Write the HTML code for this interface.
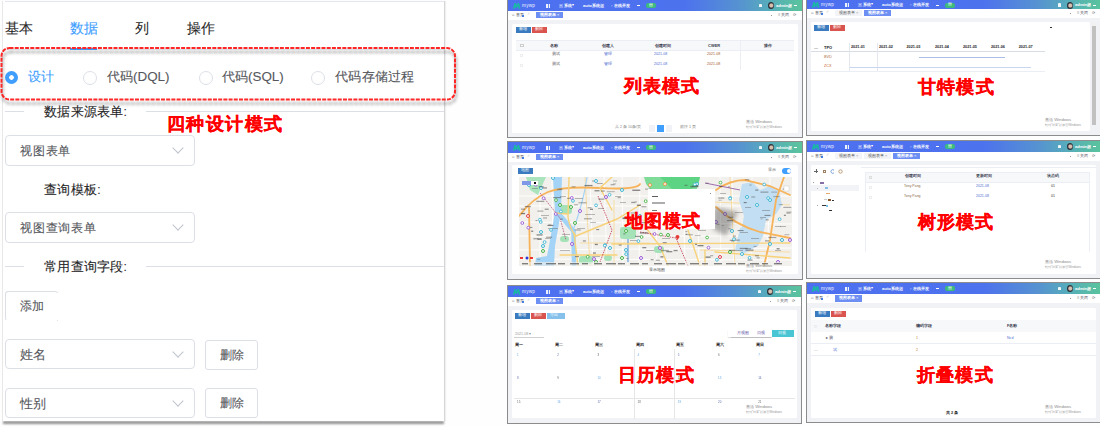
<!DOCTYPE html>
<html><head><meta charset="utf-8">
<style>
*{box-sizing:border-box;margin:0;padding:0}
html,body{width:1100px;height:427px;overflow:hidden;background:#fefefe;font-family:"Liberation Sans",sans-serif;position:relative}
.a{position:absolute;white-space:nowrap}
#panel{position:absolute;left:2px;top:1px;width:443px;height:420px;background:#fff;border-left:1px solid #e8e8e8;border-right:1px solid #d6d6d6;box-shadow:1px 0 1px rgba(0,0,0,.06)}
#pshadow{position:absolute;left:3px;top:420.5px;width:440.5px;height:3.5px;background:#8f8f8f;filter:blur(.9px)}
#ptop{position:absolute;left:5px;top:1px;width:439px;height:1px;background:#e4e7ed}
.t14{font-size:14px;line-height:16px}
.t13{font-size:13px;line-height:16px}
.t13s{font-size:13px;line-height:16px;letter-spacing:.25px}
.t13n{font-size:13px;line-height:15px}
.t12{font-size:12px;line-height:15px;letter-spacing:.8px}
.t12b{font-size:12px;line-height:15px}
.lat{font-size:13.4px;letter-spacing:0px}
.col{font-size:12px}
.gray{color:#55575c;-webkit-text-stroke:.1px #55575c}
.dark{color:#262626;-webkit-text-stroke:.1px #262626}
.blue{color:#409eff;-webkit-text-stroke:.1px #409eff}
.radio{position:absolute;width:14px;height:14px;border:1px solid #dcdfe6;border-radius:50%;background:#fff}
.radio.on{width:13px;height:13px;border:none;background:radial-gradient(circle,#fff 0 2px,#409eff 2.6px)}
.sel{position:absolute;border:1px solid #dcdfe6;border-radius:4px;background:#fff}
.chev{position:absolute;width:8px;height:8px;border-right:1px solid #c0c4cc;border-bottom:1px solid #c0c4cc;transform:rotate(45deg)}
.btn{position:absolute;border:1px solid #dcdfe6;border-radius:3px;background:#fff}
.hl{position:absolute;height:1px;background:#dcdfe6}
.lbl{font-size:18px;line-height:19px;font-weight:bold;color:#f00;-webkit-text-stroke:.25px #f00;letter-spacing:1.2px}
</style></head><body>
<div id="pshadow"></div>
<div id="panel"></div>
<div id="ptop"></div>
<!-- tabs -->
<div class="a t14 dark" style="left:5px;top:19.5px">基本</div>
<div class="a t14 blue" style="left:70px;top:19.5px">数据</div>
<div class="a t14 dark" style="left:135px;top:19.5px">列</div>
<div class="a t14 dark" style="left:187px;top:19.5px">操作</div>
<div class="a" style="left:2px;top:49px;width:442px;height:1px;background:#e4e7ed"></div>
<div class="a" style="left:70px;top:48px;width:27px;height:2px;background:#409eff"></div>
<!-- radios -->
<div class="radio on" style="left:5px;top:71px"></div>
<div class="a t13 blue" style="left:28px;top:68.5px">设计</div>
<div class="radio" style="left:83px;top:71px"></div>
<div class="a t13 gray" style="left:107px;top:68.5px">代码<span class="lat">(DQL)</span></div>
<div class="radio" style="left:199px;top:71px"></div>
<div class="a t13 gray" style="left:222px;top:68.5px">代码<span class="lat">(SQL)</span></div>
<div class="radio" style="left:311px;top:71px"></div>
<div class="a t13 gray" style="left:335px;top:68.5px;letter-spacing:.3px">代码存储过程</div>
<!-- divider 1 -->
<div class="hl" style="left:5px;top:111px;width:19px"></div>
<div class="a t13s dark" style="left:44px;top:103.5px">数据来源表单<span class="col">:</span></div>
<div class="hl" style="left:146px;top:111px;width:298px"></div>
<div class="a lbl" style="left:166.5px;top:114.5px;font-size:18px;line-height:19px;letter-spacing:1.6px">四种设计模式</div>
<!-- select 1 -->
<div class="sel" style="left:5px;top:135px;width:190px;height:31px"></div>
<div class="a t12 gray" style="left:20px;top:144px">视图表单</div>
<div class="chev" style="left:174px;top:144px"></div>
<div class="a t13 dark" style="left:44px;top:181.5px;letter-spacing:.3px">查询模板<span class="col">:</span></div>
<div class="sel" style="left:5px;top:212px;width:190px;height:31px"></div>
<div class="a t12 gray" style="left:20px;top:221px">视图查询表单</div>
<div class="chev" style="left:174px;top:221px"></div>
<!-- divider 2 -->
<div class="hl" style="left:5px;top:266px;width:19px"></div>
<div class="a t13s dark" style="left:44px;top:258.5px">常用查询字段<span class="col">:</span></div>
<div class="hl" style="left:146px;top:266px;width:298px"></div>
<!-- add -->
<div class="btn" style="left:5px;top:291px;width:53px;height:30px;border-right-color:transparent;border-bottom-color:transparent"></div>
<div class="a" style="left:56.5px;top:291.5px;width:1px;height:1.5px;background:#dcdfe6"></div>
<div class="a" style="left:57px;top:319.5px;width:1px;height:1px;background:#e2e4ea"></div>
<div class="a t12b gray" style="left:20px;top:299px">添加</div>
<div class="sel" style="left:5px;top:339px;width:190px;height:30px"></div>
<div class="a t13n gray" style="left:20px;top:346.5px">姓名</div>
<div class="chev" style="left:174px;top:348px"></div>
<div class="btn" style="left:205px;top:340px;width:53px;height:30px"></div>
<div class="a t12b gray" style="left:220px;top:347.5px">删除</div>
<div class="sel" style="left:5px;top:388px;width:190px;height:30px"></div>
<div class="a t13n gray" style="left:20px;top:395.5px">性别</div>
<div class="chev" style="left:174px;top:397px"></div>
<div class="btn" style="left:205px;top:388px;width:53px;height:30px"></div>
<div class="a t12b gray" style="left:220px;top:396px">删除</div>
<!-- dashed highlight -->
<svg class="a" style="left:0;top:0;filter:drop-shadow(1px 4px 1.5px rgba(0,0,0,.38))" width="470" height="120">
<rect x="1.5" y="48" width="453.5" height="51.5" rx="8" ry="8" fill="none" stroke="#ff2626" stroke-width="2" stroke-dasharray="4 1.2"/>
</svg>

<div class="a" style="left:507px;top:-2px;width:296px;height:140px;border:1px solid #8c8c8c;background:#f0f2f5"></div><div class="a" style="left:508px;top:0px;width:294px;height:10.5px;background:linear-gradient(90deg,#4d70f0 0%,#4d72ee 60%,#5693d0 79%,#56adba 89%,#5ac49c 100%)"></div><svg class="a" style="left:513px;top:3.05px" width="8" height="6" viewBox="0 0 8 6"><path d="M0.6 5.8 L2.2 0.6 L3.4 4.2 L5.4 0.6 L6.6 5.8" fill="none" stroke="#1bb7a6" stroke-width="1.7" stroke-linejoin="round"/></svg><div class="a" style="left:522px;top:3.6499999999999995px;font-size:4.6px;line-height:4.6px;color:#f4f7ff;letter-spacing:.3px">mywp</div><div class="a" style="left:546px;top:4.05px;width:4px;height:3.6px;background:#fff;opacity:.9"></div><div class="a" style="left:547.8px;top:4.05px;width:0.6px;height:3.6px;background:#6c8cf0"></div><div class="a" style="left:559px;top:3.6499999999999995px;font-size:4.2px;line-height:4.2px;color:#fff;font-weight:bold">三 系统</div><div class="a" style="left:572px;top:3.8499999999999996px;font-size:3.5px;line-height:3.5px;color:#fff;">▾</div><div class="a" style="left:583px;top:3.6499999999999995px;font-size:4.2px;line-height:4.2px;color:#fff;font-weight:bold">auto系统运</div><div class="a" style="left:611px;top:3.6499999999999995px;font-size:4.2px;line-height:4.2px;color:#fff;font-weight:bold">◦ 在线开发</div><div class="a" style="left:637px;top:5.35px;width:3px;height:1px;background:#fff"></div><div class="a" style="left:646px;top:3.3499999999999996px;width:10px;height:5px;background:#3dba7e;border-radius:2px"></div><div class="a" style="left:648.5px;top:4.05px;font-size:3.6px;line-height:3.6px;color:#fff;">▤</div><div class="a" style="left:759px;top:3.8499999999999996px;width:2.5px;height:3.5px;background:#fff;border-radius:1px 1px 0 0;opacity:.9"></div><div class="a" style="left:768px;top:2.3499999999999996px;width:6px;height:7px;background:radial-gradient(circle at 55% 50%,#d8c0b0 0 30%,#2e3038 55%);border-radius:50%"></div><div class="a" style="left:776px;top:3.6499999999999995px;font-size:4.2px;line-height:4.2px;color:#fff;font-weight:bold">admin超</div><div class="a" style="left:794px;top:5.35px;width:3px;height:1px;background:#fff"></div><div class="a" style="left:508px;top:10.5px;width:294px;height:9.5px;background:#fff"></div><div class="a" style="left:512px;top:13.25px;font-size:4px;line-height:4px;color:#4a4f5c;">⌂ 首页</div><div class="a" style="left:522px;top:15.25px;width:2px;height:1.5px;background:#4a7de0"></div><div class="a" style="left:527px;top:13.25px;font-size:3.5px;line-height:3.5px;color:#bbb;">✓</div><div class="a" style="left:536px;top:11.95px;width:27px;height:6.5px;background:#6d8ef2"></div><div class="a" style="left:540px;top:13.25px;font-size:4px;line-height:4px;color:#fff;font-weight:bold">视图表单</div><div class="a" style="left:557px;top:13.25px;font-size:4px;line-height:4px;color:#fff;">×</div><div class="a" style="left:771px;top:14.75px;width:1px;height:1px;background:#999"></div><div class="a" style="left:778px;top:13.25px;font-size:4px;line-height:4px;color:#556;">≡ 关闭</div><div class="a" style="left:793px;top:13.05px;font-size:4.4px;line-height:4.4px;color:#777;">⟳</div><div class="a" style="left:512px;top:24px;width:286px;height:108.5px;background:#fff;border-radius:1.5px"></div><div class="a" style="left:516px;top:27px;width:15px;height:6px;background:#3a7bbf"></div><div class="a" style="left:519px;top:28.2px;font-size:3.6px;line-height:3.6px;color:#fff;">新增</div><div class="a" style="left:532px;top:27px;width:15px;height:6px;background:#d9534f"></div><div class="a" style="left:535px;top:28.2px;font-size:3.6px;line-height:3.6px;color:#fff;">删除</div><div class="a" style="left:516px;top:40px;width:278px;height:1px;background:#ebeef5"></div><div class="a" style="left:516px;top:41px;width:278px;height:9px;background:#f7f8fa"></div><div class="a" style="left:516px;top:50px;width:278px;height:0.5px;background:#ebeef5"></div><div class="a" style="left:740px;top:40px;width:1px;height:30px;background:#ebeef5"></div><div class="a" style="left:520px;top:43.5px;width:3.5px;height:3.5px;border:0.6px solid #ccc;background:#fff"></div><div class="a" style="left:550px;top:43.5px;font-size:4px;line-height:4px;color:#3d4250;font-weight:bold">名称</div><div class="a" style="left:602px;top:43.5px;font-size:4px;line-height:4px;color:#3d4250;font-weight:bold">创建人</div><div class="a" style="left:655px;top:43.5px;font-size:4px;line-height:4px;color:#3d4250;font-weight:bold">创建时间</div><div class="a" style="left:708px;top:43.5px;font-size:4px;line-height:4px;color:#3d4250;font-weight:bold">CWER</div><div class="a" style="left:764px;top:43.5px;font-size:4px;line-height:4px;color:#3d4250;font-weight:bold">操作</div><div class="a" style="left:520px;top:54px;width:3px;height:3px;border:0.5px solid #eee"></div><div class="a" style="left:552px;top:53px;font-size:3.6px;line-height:3.6px;color:#555;">测试</div><div class="a" style="left:604px;top:53px;font-size:3.6px;line-height:3.6px;color:#4a6cd0;">管理</div><div class="a" style="left:654px;top:53px;font-size:3.6px;line-height:3.6px;color:#4a6cd0;">2021-08</div><div class="a" style="left:707px;top:53px;font-size:3.6px;line-height:3.6px;color:#a05a2c;">2021-08</div><div class="a" style="left:520px;top:64px;width:3px;height:3px;border:0.5px solid #eee"></div><div class="a" style="left:552px;top:63px;font-size:3.6px;line-height:3.6px;color:#555;">测试</div><div class="a" style="left:604px;top:63px;font-size:3.6px;line-height:3.6px;color:#4a6cd0;">管理</div><div class="a" style="left:654px;top:63px;font-size:3.6px;line-height:3.6px;color:#4a6cd0;">2021-08</div><div class="a" style="left:707px;top:63px;font-size:3.6px;line-height:3.6px;color:#a05a2c;">2021-08</div><div class="a lbl" style="left:623.5px;top:77px">列表模式</div><div class="a" style="left:615px;top:126px;font-size:3.6px;line-height:3.6px;color:#888;">共 2 条 10条/页</div><div class="a" style="left:649px;top:125px;width:6px;height:6.5px;background:#f0f2f5"></div><div class="a" style="left:657px;top:125px;width:7px;height:6.5px;background:#409eff"></div><div class="a" style="left:666px;top:125px;width:6px;height:6.5px;background:#f0f2f5"></div><div class="a" style="left:680px;top:126px;font-size:3.6px;line-height:3.6px;color:#777;">前往 1 页</div><div class="a" style="left:746px;top:120px;font-size:4.2px;line-height:4.2px;color:#8a8a8a;">激活 Windows</div><div class="a" style="left:746px;top:126.3px;font-size:3.1px;line-height:3.1px;color:#999;">转到"设置"以激活Windows。</div><div class="a" style="left:806px;top:-2px;width:296px;height:138px;border:1px solid #8c8c8c;background:#f0f2f5"></div><div class="a" style="left:807px;top:0px;width:294px;height:9px;background:linear-gradient(90deg,#4d70f0 0%,#4d72ee 60%,#5693d0 79%,#56adba 89%,#5ac49c 100%)"></div><svg class="a" style="left:812px;top:2.3px" width="8" height="6" viewBox="0 0 8 6"><path d="M0.6 5.8 L2.2 0.6 L3.4 4.2 L5.4 0.6 L6.6 5.8" fill="none" stroke="#1bb7a6" stroke-width="1.7" stroke-linejoin="round"/></svg><div class="a" style="left:821px;top:2.8999999999999995px;font-size:4.6px;line-height:4.6px;color:#f4f7ff;letter-spacing:.3px">mywp</div><div class="a" style="left:845px;top:3.3px;width:4px;height:3.6px;background:#fff;opacity:.9"></div><div class="a" style="left:846.8px;top:3.3px;width:0.6px;height:3.6px;background:#6c8cf0"></div><div class="a" style="left:858px;top:2.8999999999999995px;font-size:4.2px;line-height:4.2px;color:#fff;font-weight:bold">三 系统</div><div class="a" style="left:871px;top:3.0999999999999996px;font-size:3.5px;line-height:3.5px;color:#fff;">▾</div><div class="a" style="left:882px;top:2.8999999999999995px;font-size:4.2px;line-height:4.2px;color:#fff;font-weight:bold">auto系统运</div><div class="a" style="left:910px;top:2.8999999999999995px;font-size:4.2px;line-height:4.2px;color:#fff;font-weight:bold">◦ 在线开发</div><div class="a" style="left:936px;top:4.6px;width:3px;height:1px;background:#fff"></div><div class="a" style="left:945px;top:2.5999999999999996px;width:10px;height:5px;background:#3dba7e;border-radius:2px"></div><div class="a" style="left:947.5px;top:3.3px;font-size:3.6px;line-height:3.6px;color:#fff;">▤</div><div class="a" style="left:1058px;top:3.0999999999999996px;width:2.5px;height:3.5px;background:#fff;border-radius:1px 1px 0 0;opacity:.9"></div><div class="a" style="left:1067px;top:1.5999999999999996px;width:6px;height:7px;background:radial-gradient(circle at 55% 50%,#d8c0b0 0 30%,#2e3038 55%);border-radius:50%"></div><div class="a" style="left:1075px;top:2.8999999999999995px;font-size:4.2px;line-height:4.2px;color:#fff;font-weight:bold">admin超</div><div class="a" style="left:1093px;top:4.6px;width:3px;height:1px;background:#fff"></div><div class="a" style="left:807px;top:9px;width:294px;height:8.5px;background:#fff"></div><div class="a" style="left:811px;top:11.25px;font-size:4px;line-height:4px;color:#4a4f5c;">⌂ 首页</div><div class="a" style="left:821px;top:13.25px;width:2px;height:1.5px;background:#4a7de0"></div><div class="a" style="left:826px;top:11.25px;font-size:3.5px;line-height:3.5px;color:#bbb;">✓</div><div class="a" style="left:835px;top:9.95px;width:27px;height:6.5px;background:#f3f4f7"></div><div class="a" style="left:839px;top:11.25px;font-size:4px;line-height:4px;color:#555;">视图表单</div><div class="a" style="left:856px;top:11.25px;font-size:4px;line-height:4px;color:#999;">×</div><div class="a" style="left:864px;top:9.95px;width:27px;height:6.5px;background:#6d8ef2"></div><div class="a" style="left:868px;top:11.25px;font-size:4px;line-height:4px;color:#fff;font-weight:bold">视图表单</div><div class="a" style="left:885px;top:11.25px;font-size:4px;line-height:4px;color:#fff;">×</div><div class="a" style="left:1070px;top:12.75px;width:1px;height:1px;background:#999"></div><div class="a" style="left:1077px;top:11.25px;font-size:4px;line-height:4px;color:#556;">≡ 关闭</div><div class="a" style="left:1092px;top:11.05px;font-size:4.4px;line-height:4.4px;color:#777;">⟳</div><div class="a" style="left:811px;top:21.5px;width:279px;height:109.5px;background:#fff;border-radius:1.5px"></div><div class="a" style="left:814px;top:25px;width:15px;height:6px;background:#3a7bbf"></div><div class="a" style="left:817px;top:26.2px;font-size:3.6px;line-height:3.6px;color:#fff;">新增</div><div class="a" style="left:830px;top:25px;width:15px;height:6px;background:#d9534f"></div><div class="a" style="left:833px;top:26.2px;font-size:3.6px;line-height:3.6px;color:#fff;">删除</div><div class="a" style="left:814px;top:45.5px;font-size:4px;line-height:4px;color:#333;">—</div><div class="a" style="left:824px;top:45.5px;font-size:4px;line-height:4px;color:#222;font-weight:bold">TPO</div><div class="a" style="left:851px;top:46px;font-size:3.8px;line-height:3.8px;color:#222;font-weight:bold">2021-01</div><div class="a" style="left:879px;top:46px;font-size:3.8px;line-height:3.8px;color:#222;font-weight:bold">2021-02</div><div class="a" style="left:906.5px;top:46px;font-size:3.8px;line-height:3.8px;color:#222;font-weight:bold">2021-03</div><div class="a" style="left:935px;top:46px;font-size:3.8px;line-height:3.8px;color:#222;font-weight:bold">2021-04</div><div class="a" style="left:963px;top:46px;font-size:3.8px;line-height:3.8px;color:#222;font-weight:bold">2021-05</div><div class="a" style="left:991px;top:46px;font-size:3.8px;line-height:3.8px;color:#222;font-weight:bold">2021-06</div><div class="a" style="left:1018.7px;top:46px;font-size:3.8px;line-height:3.8px;color:#222;font-weight:bold">2021-07</div><div class="a" style="left:811px;top:51px;width:234px;height:1px;background:#d8dce5"></div><div class="a" style="left:811px;top:71px;width:234px;height:1px;background:#ebeef5"></div><div class="a" style="left:849px;top:43px;width:1px;height:28px;background:#e4e7ed"></div><div class="a" style="left:877px;top:43px;width:1px;height:28px;background:#e4e7ed"></div><div class="a" style="left:824px;top:55.5px;font-size:3.8px;line-height:3.8px;color:#b0703c;">BVD</div><div class="a" style="left:824px;top:65px;font-size:3.8px;line-height:3.8px;color:#c06030;">ZCX</div><div class="a" style="left:919px;top:57px;width:86px;height:1px;background:#a9bde8"></div><div class="a" style="left:850px;top:66.5px;width:181px;height:1.5px;background:#c9d6f2"></div><div class="a" style="left:1050px;top:27px;width:2px;height:1px;background:#333"></div><div class="a" style="left:1092px;top:23px;width:3.5px;height:102px;background:#c1c1c1"></div><div class="a" style="left:1092px;top:23px;width:3.5px;height:3px;background:#f1f1f1"></div><div class="a lbl" style="left:918px;top:78px">甘特模式</div><div class="a" style="left:1045px;top:118px;font-size:4.2px;line-height:4.2px;color:#8a8a8a;">激活 Windows</div><div class="a" style="left:1045px;top:124.3px;font-size:3.1px;line-height:3.1px;color:#999;">转到"设置"以激活Windows。</div><div class="a" style="left:507px;top:141px;width:296px;height:139px;border:1px solid #8c8c8c;background:#f0f2f5"></div><div class="a" style="left:508px;top:142px;width:294px;height:10.5px;background:linear-gradient(90deg,#4d70f0 0%,#4d72ee 60%,#5693d0 79%,#56adba 89%,#5ac49c 100%)"></div><svg class="a" style="left:513px;top:145.04999999999998px" width="8" height="6" viewBox="0 0 8 6"><path d="M0.6 5.8 L2.2 0.6 L3.4 4.2 L5.4 0.6 L6.6 5.8" fill="none" stroke="#1bb7a6" stroke-width="1.7" stroke-linejoin="round"/></svg><div class="a" style="left:522px;top:145.65px;font-size:4.6px;line-height:4.6px;color:#f4f7ff;letter-spacing:.3px">mywp</div><div class="a" style="left:546px;top:146.04999999999998px;width:4px;height:3.6px;background:#fff;opacity:.9"></div><div class="a" style="left:547.8px;top:146.04999999999998px;width:0.6px;height:3.6px;background:#6c8cf0"></div><div class="a" style="left:559px;top:145.65px;font-size:4.2px;line-height:4.2px;color:#fff;font-weight:bold">三 系统</div><div class="a" style="left:572px;top:145.85px;font-size:3.5px;line-height:3.5px;color:#fff;">▾</div><div class="a" style="left:583px;top:145.65px;font-size:4.2px;line-height:4.2px;color:#fff;font-weight:bold">auto系统运</div><div class="a" style="left:611px;top:145.65px;font-size:4.2px;line-height:4.2px;color:#fff;font-weight:bold">◦ 在线开发</div><div class="a" style="left:637px;top:147.35px;width:3px;height:1px;background:#fff"></div><div class="a" style="left:646px;top:145.35px;width:10px;height:5px;background:#3dba7e;border-radius:2px"></div><div class="a" style="left:648.5px;top:146.04999999999998px;font-size:3.6px;line-height:3.6px;color:#fff;">▤</div><div class="a" style="left:759px;top:145.85px;width:2.5px;height:3.5px;background:#fff;border-radius:1px 1px 0 0;opacity:.9"></div><div class="a" style="left:768px;top:144.35px;width:6px;height:7px;background:radial-gradient(circle at 55% 50%,#d8c0b0 0 30%,#2e3038 55%);border-radius:50%"></div><div class="a" style="left:776px;top:145.65px;font-size:4.2px;line-height:4.2px;color:#fff;font-weight:bold">admin超</div><div class="a" style="left:794px;top:147.35px;width:3px;height:1px;background:#fff"></div><div class="a" style="left:508px;top:152.5px;width:294px;height:9.0px;background:#fff"></div><div class="a" style="left:512px;top:155.0px;font-size:4px;line-height:4px;color:#4a4f5c;">⌂ 首页</div><div class="a" style="left:522px;top:157.0px;width:2px;height:1.5px;background:#4a7de0"></div><div class="a" style="left:527px;top:155.0px;font-size:3.5px;line-height:3.5px;color:#bbb;">✓</div><div class="a" style="left:536px;top:153.7px;width:27px;height:6.5px;background:#6d8ef2"></div><div class="a" style="left:540px;top:155.0px;font-size:4px;line-height:4px;color:#fff;font-weight:bold">视图表单</div><div class="a" style="left:557px;top:155.0px;font-size:4px;line-height:4px;color:#fff;">×</div><div class="a" style="left:771px;top:156.5px;width:1px;height:1px;background:#999"></div><div class="a" style="left:778px;top:155.0px;font-size:4px;line-height:4px;color:#556;">≡ 关闭</div><div class="a" style="left:793px;top:154.8px;font-size:4.4px;line-height:4.4px;color:#777;">⟳</div><div class="a" style="left:512px;top:164.5px;width:286px;height:109.5px;background:#fff;border-radius:1.5px"></div><div class="a" style="left:518px;top:168px;width:15px;height:6px;background:#3a7bbf"></div><div class="a" style="left:521px;top:169.2px;font-size:3.6px;line-height:3.6px;color:#fff;">地图</div><div class="a" style="left:768px;top:169px;font-size:3.6px;line-height:3.6px;color:#666;">显示</div><div class="a" style="left:782px;top:168px;width:9px;height:5.5px;background:#409eff;border-radius:3px"></div><div class="a" style="left:786.5px;top:168.8px;width:4px;height:4px;background:#fff;border-radius:50%"></div><svg class="a" style="left:519px;top:177px" width="273" height="89" viewBox="0 0 273 89"><rect width="273" height="89" fill="#f2f0ec"/><path d="M0 19 L273 19" fill="none" stroke="#ffffff" stroke-width="1" opacity=".9"/><path d="M0 29 L273 29" fill="none" stroke="#ffffff" stroke-width="1" opacity=".9"/><path d="M0 45 L273 47" fill="none" stroke="#ffffff" stroke-width="1" opacity=".9"/><path d="M0 59 L273 59" fill="none" stroke="#ffffff" stroke-width="1" opacity=".9"/><path d="M0 73 L273 71" fill="none" stroke="#ffffff" stroke-width="1" opacity=".9"/><path d="M0 82 L273 83" fill="none" stroke="#ffffff" stroke-width="1" opacity=".9"/><path d="M21 0 L21 89" fill="none" stroke="#ffffff" stroke-width="1" opacity=".9"/><path d="M33 0 L34 89" fill="none" stroke="#ffffff" stroke-width="1" opacity=".9"/><path d="M71 0 L74 89" fill="none" stroke="#ffffff" stroke-width="1" opacity=".9"/><path d="M85 0 L88 89" fill="none" stroke="#ffffff" stroke-width="1" opacity=".9"/><path d="M103 0 L104 89" fill="none" stroke="#ffffff" stroke-width="1" opacity=".9"/><path d="M121 0 L120 89" fill="none" stroke="#ffffff" stroke-width="1" opacity=".9"/><path d="M136 0 L138 89" fill="none" stroke="#ffffff" stroke-width="1" opacity=".9"/><path d="M164 0 L166 89" fill="none" stroke="#ffffff" stroke-width="1" opacity=".9"/><path d="M178 0 L180 89" fill="none" stroke="#ffffff" stroke-width="1" opacity=".9"/><path d="M201 0 L202 89" fill="none" stroke="#ffffff" stroke-width="1" opacity=".9"/><path d="M213 0 L215 89" fill="none" stroke="#ffffff" stroke-width="1" opacity=".9"/><path d="M233 0 L232 89" fill="none" stroke="#ffffff" stroke-width="1" opacity=".9"/><path d="M251 0 L248 89" fill="none" stroke="#ffffff" stroke-width="1" opacity=".9"/><path d="M61 66 L131 66" fill="none" stroke="#f6dca4" stroke-width="1"/><path d="M95 23 L95 89" fill="none" stroke="#f6dca4" stroke-width="1"/><path d="M121 43 L181 45" fill="none" stroke="#f6dca4" stroke-width="1"/><path d="M181 73 L271 75" fill="none" stroke="#f6dca4" stroke-width="1"/><path d="M66 0 L71 89" fill="none" stroke="#f6dca4" stroke-width="1"/><path d="M211 0 L216 89" fill="none" stroke="#f6dca4" stroke-width="1"/><path d="M141 23 L271 28" fill="none" stroke="#f6dca4" stroke-width="1"/><path d="M109 51 L109 85" fill="none" stroke="#4a90d8" stroke-width="1"/><polygon points="125.0,0.0 181.0,0.0 179.0,9.0 171.0,12.0 131.0,12.0 127.0,7.0" fill="#7edc98"/><polygon points="141.0,0.0 181.0,0.0 178.0,12.0 153.0,12.0" fill="#4fd07a" opacity=".7"/><polygon points="7.0,0.0 27.0,0.0 19.0,18.0 11.0,13.0" fill="#a9e4bd"/><rect x="39" y="28" width="14" height="9" rx="3" fill="#a6e2b8"/><rect x="101" y="50" width="16" height="12" rx="3" fill="#a6e2b8"/><rect x="135" y="69" width="10" height="7" rx="3" fill="#a6e2b8"/><rect x="60" y="79" width="14" height="8" rx="3" fill="#a6e2b8"/><rect x="181" y="19" width="14" height="10" rx="3" fill="#a6e2b8"/><rect x="85" y="78" width="8" height="6" rx="3" fill="#a6e2b8"/><rect x="41" y="59" width="9" height="6" rx="3" fill="#a6e2b8"/><polygon points="223.0,7.0 233.0,5.0 241.0,13.0 251.0,9.0 260.0,13.0 263.0,28.0 257.0,37.0 247.0,43.0 244.0,59.0 239.0,69.0 227.0,75.0 218.0,69.0 222.0,55.0 225.0,39.0 220.0,23.0" fill="#c2def2"/><polygon points="221.0,51.0 231.0,49.0 236.0,69.0 226.0,76.0 216.0,73.0" fill="#c2def2"/><path d="M34 0 L43 0 L42 35 L36 69 L35 89 L16 89 L17 81 L28 79 L30 69 L36 35 Z" fill="#a3d3f6"/><path d="M39 36 Q47 45 54.5 54 L55 89" fill="none" stroke="#a3d3f6" stroke-width="4.5"/><path d="M68 0 Q65 23 55 51" fill="none" stroke="#a3d3f6" stroke-width="1.2"/><path d="M0 39 Q14 21 29 15 T81 11 T121 7" fill="none" stroke="#f7b35a" stroke-width="1.8" stroke-linecap="round"/><path d="M10 31 L11 89" fill="none" stroke="#f7b35a" stroke-width="1.8" stroke-linecap="round"/><path d="M50 0 L49 40 Q51 53 57 59" fill="none" stroke="#f7d27a" stroke-width="1.4" stroke-linecap="round"/><path d="M57 59 L98 42 L121 28" fill="none" stroke="#f7d27a" stroke-width="1.4" stroke-linecap="round"/><path d="M36 36 L49 37" fill="none" stroke="#f7d27a" stroke-width="1.4" stroke-linecap="round"/><path d="M41 78 L98 78" fill="none" stroke="#f7d27a" stroke-width="1.4" stroke-linecap="round"/><path d="M55 56 L59 89" fill="none" stroke="#f7d27a" stroke-width="1.4" stroke-linecap="round"/><path d="M93 67 L271 66" fill="none" stroke="#f7d27a" stroke-width="1.4" stroke-linecap="round"/><path d="M127 51 L141 69 L149 89" fill="none" stroke="#f7d27a" stroke-width="1.4" stroke-linecap="round"/><path d="M197 13 Q211 3 226 3 L251 9 L271 18" fill="none" stroke="#f7b35a" stroke-width="1.8" stroke-linecap="round"/><path d="M197 30 Q216 48 241 55 L271 61" fill="none" stroke="#f7b35a" stroke-width="1.8" stroke-linecap="round"/><path d="M265 0 L257 23 L251 63 L245 89" fill="none" stroke="#f7b35a" stroke-width="1.8" stroke-linecap="round"/><path d="M186 73 L186 89" fill="none" stroke="#f7d27a" stroke-width="1.4" stroke-linecap="round"/><path d="M169 53 L181 89" fill="none" stroke="#f7d27a" stroke-width="1.4" stroke-linecap="round"/><path d="M93 33 L81 11 L93 0" fill="none" stroke="#f7d27a" stroke-width="1.4" stroke-linecap="round"/><path d="M196 75 L271 81" fill="none" stroke="#f7d27a" stroke-width="1.4" stroke-linecap="round"/><path d="M21 16 L41 41 L47 63" fill="none" stroke="#b04a7a" stroke-width=".8" stroke-dasharray="1.5 1"/><path d="M79 19 L93 53 L81 85" fill="none" stroke="#c0304a" stroke-width=".8" stroke-dasharray="1.5 1"/><path d="M121 55 L157 61 L169 89" fill="none" stroke="#c0304a" stroke-width=".8" stroke-dasharray="1.5 1"/><path d="M186 6 L221 13" fill="none" stroke="#8a4aa0" stroke-width=".8"/><circle cx="10" cy="8" r="1.5" fill="#fff" stroke="#3fb6d4" stroke-width="1"/><circle cx="22" cy="11" r="1.5" fill="#fff" stroke="#3fb6d4" stroke-width="1"/><circle cx="34" cy="1" r="1.5" fill="#fff" stroke="#3fb6d4" stroke-width="1"/><circle cx="77" cy="4" r="1.5" fill="#fff" stroke="#3fb6d4" stroke-width="1"/><circle cx="61" cy="34" r="1.5" fill="#fff" stroke="#9b5bd6" stroke-width="1"/><circle cx="41" cy="28" r="1.5" fill="#fff" stroke="#47b347" stroke-width="1"/><circle cx="52" cy="30" r="1.5" fill="#fff" stroke="#47b347" stroke-width="1"/><circle cx="56" cy="46" r="1.5" fill="#fff" stroke="#47b347" stroke-width="1"/><circle cx="24" cy="69" r="1.5" fill="#fff" stroke="#3fb6d4" stroke-width="1"/><circle cx="22" cy="55" r="1.5" fill="#fff" stroke="#3fb6d4" stroke-width="1"/><circle cx="24" cy="74" r="1.5" fill="#fff" stroke="#47b347" stroke-width="1"/><circle cx="53" cy="67" r="1.5" fill="#fff" stroke="#9b5bd6" stroke-width="1"/><circle cx="77" cy="85" r="1.5" fill="#fff" stroke="#47b347" stroke-width="1"/><circle cx="91" cy="71" r="1.5" fill="#fff" stroke="#3fb6d4" stroke-width="1"/><circle cx="75" cy="82" r="1.5" fill="#fff" stroke="#9b5bd6" stroke-width="1"/><circle cx="131" cy="8" r="1.5" fill="#fff" stroke="#e89a4a" stroke-width="1"/><circle cx="146" cy="7" r="1.5" fill="#fff" stroke="#e89a4a" stroke-width="1"/><circle cx="103" cy="13" r="1.5" fill="#fff" stroke="#3fb6d4" stroke-width="1"/><circle cx="121" cy="39" r="1.5" fill="#fff" stroke="#3fb6d4" stroke-width="1"/><circle cx="107" cy="54" r="1.5" fill="#fff" stroke="#47b347" stroke-width="1"/><circle cx="122" cy="81" r="1.5" fill="#fff" stroke="#9b5bd6" stroke-width="1"/><circle cx="103" cy="81" r="1.5" fill="#fff" stroke="#47b347" stroke-width="1"/><circle cx="107" cy="73" r="1.5" fill="#fff" stroke="#3fb6d4" stroke-width="1"/><circle cx="141" cy="71" r="1.5" fill="#fff" stroke="#9b5bd6" stroke-width="1"/><circle cx="149" cy="58" r="1.5" fill="#fff" stroke="#47b347" stroke-width="1"/><circle cx="171" cy="64" r="1.5" fill="#fff" stroke="#3fb6d4" stroke-width="1"/><circle cx="178" cy="7" r="1.5" fill="#fff" stroke="#3fb6d4" stroke-width="1"/><circle cx="197" cy="45" r="1.5" fill="#fff" stroke="#9b5bd6" stroke-width="1"/><circle cx="206" cy="37" r="1.5" fill="#fff" stroke="#9b5bd6" stroke-width="1"/><circle cx="213" cy="54" r="1.5" fill="#fff" stroke="#3fb6d4" stroke-width="1"/><circle cx="238" cy="28" r="1.5" fill="#fff" stroke="#3fb6d4" stroke-width="1"/><circle cx="228" cy="20" r="1.5" fill="#fff" stroke="#3fb6d4" stroke-width="1"/><circle cx="251" cy="23" r="1.5" fill="#fff" stroke="#3fb6d4" stroke-width="1"/><circle cx="223" cy="77" r="1.5" fill="#fff" stroke="#3fb6d4" stroke-width="1"/><circle cx="251" cy="67" r="1.5" fill="#fff" stroke="#3fb6d4" stroke-width="1"/><circle cx="263" cy="63" r="1.5" fill="#fff" stroke="#3fb6d4" stroke-width="1"/><circle cx="211" cy="75" r="1.5" fill="#fff" stroke="#47b347" stroke-width="1"/><circle cx="201" cy="80" r="1.5" fill="#fff" stroke="#e0404a" stroke-width="1"/><circle cx="271" cy="63" r="1.5" fill="#fff" stroke="#9b5bd6" stroke-width="1"/><circle cx="259" cy="85" r="1.5" fill="#fff" stroke="#9b5bd6" stroke-width="1"/><circle cx="9" cy="39" r="1.5" fill="#fff" stroke="#e0404a" stroke-width="1"/><circle cx="181" cy="33" r="1.5" fill="#fff" stroke="#47b347" stroke-width="1"/><circle cx="87" cy="20" r="1.5" fill="#fff" stroke="#9b5bd6" stroke-width="1"/><rect x="13" y="11" width="6" height="1" fill="#5a5a5a" opacity=".4"/><rect x="22" y="38" width="8" height="1" fill="#5a5a5a" opacity=".4"/><rect x="29" y="51" width="10" height="1" fill="#5a5a5a" opacity=".4"/><rect x="41" y="19" width="6" height="1" fill="#5a5a5a" opacity=".4"/><rect x="56" y="21" width="8" height="1" fill="#5a5a5a" opacity=".4"/><rect x="66" y="37" width="10" height="1" fill="#5a5a5a" opacity=".4"/><rect x="58" y="51" width="8" height="1" fill="#5a5a5a" opacity=".4"/><rect x="43" y="57" width="8" height="1" fill="#5a5a5a" opacity=".4"/><rect x="71" y="45" width="6" height="1" fill="#5a5a5a" opacity=".4"/><rect x="26" y="61" width="6" height="1" fill="#5a5a5a" opacity=".4"/><rect x="41" y="73" width="10" height="1" fill="#5a5a5a" opacity=".4"/><rect x="73" y="79" width="8" height="1" fill="#5a5a5a" opacity=".4"/><rect x="79" y="31" width="6" height="1" fill="#5a5a5a" opacity=".4"/><rect x="96" y="19" width="6" height="1" fill="#5a5a5a" opacity=".4"/><rect x="101" y="25" width="6" height="1" fill="#5a5a5a" opacity=".4"/><rect x="111" y="63" width="8" height="1" fill="#5a5a5a" opacity=".4"/><rect x="127" y="73" width="8" height="1" fill="#5a5a5a" opacity=".4"/><rect x="143" y="61" width="8" height="1" fill="#5a5a5a" opacity=".4"/><rect x="179" y="53" width="8" height="1" fill="#5a5a5a" opacity=".4"/><rect x="201" y="16" width="6" height="1" fill="#5a5a5a" opacity=".4"/><rect x="226" y="30" width="6" height="1" fill="#5a5a5a" opacity=".4"/><rect x="216" y="35" width="8" height="1" fill="#5a5a5a" opacity=".4"/><rect x="241" y="40" width="6" height="1" fill="#5a5a5a" opacity=".4"/><rect x="243" y="33" width="8" height="1" fill="#5a5a5a" opacity=".4"/><rect x="221" y="55" width="8" height="1" fill="#5a5a5a" opacity=".4"/><rect x="232" y="61" width="8" height="1" fill="#5a5a5a" opacity=".4"/><rect x="216" y="73" width="8" height="1" fill="#5a5a5a" opacity=".4"/><rect x="226" y="71" width="6" height="1" fill="#5a5a5a" opacity=".4"/><rect x="256" y="49" width="6" height="1" fill="#5a5a5a" opacity=".4"/><rect x="261" y="49" width="6" height="1" fill="#5a5a5a" opacity=".4"/><rect x="256" y="73" width="6" height="1" fill="#5a5a5a" opacity=".4"/><rect x="87.8" y="14.2" width="8" height="1" fill="#444" opacity="0.38"/><rect x="16.5" y="43.1" width="2" height="1" fill="#444" opacity="0.50"/><rect x="19.7" y="9.3" width="5" height="1" fill="#444" opacity="0.64"/><rect x="34.2" y="20.1" width="8" height="1" fill="#444" opacity="0.55"/><rect x="107.3" y="81.1" width="2" height="1" fill="#444" opacity="0.45"/><rect x="39.7" y="11.5" width="4" height="1" fill="#444" opacity="0.39"/><rect x="27.1" y="59.7" width="6" height="1" fill="#444" opacity="0.57"/><rect x="209.3" y="39.7" width="5" height="1.3" fill="#444" opacity="0.45"/><rect x="213.9" y="58.6" width="3" height="1" fill="#444" opacity="0.55"/><rect x="141.8" y="72.9" width="8" height="1.3" fill="#444" opacity="0.45"/><rect x="263.7" y="11.6" width="5" height="1" fill="#444" opacity="0.61"/><rect x="41.7" y="41.6" width="2" height="1" fill="#444" opacity="0.62"/><rect x="154.6" y="72.9" width="4" height="1.3" fill="#444" opacity="0.59"/><rect x="123.3" y="70.0" width="4" height="1.3" fill="#444" opacity="0.59"/><rect x="18.4" y="61.2" width="4" height="1.3" fill="#444" opacity="0.45"/><rect x="104.4" y="56.2" width="2" height="1.3" fill="#444" opacity="0.47"/><rect x="59.5" y="25.3" width="8" height="1" fill="#444" opacity="0.49"/><rect x="246.7" y="42.2" width="3" height="1.3" fill="#444" opacity="0.49"/><rect x="75.5" y="13.1" width="5" height="1.3" fill="#444" opacity="0.60"/><rect x="265.4" y="57.3" width="5" height="1" fill="#444" opacity="0.40"/><rect x="48.2" y="20.8" width="3" height="1" fill="#444" opacity="0.52"/><rect x="2.1" y="35.9" width="4" height="1.3" fill="#444" opacity="0.68"/><rect x="166.5" y="56.8" width="2" height="1.3" fill="#444" opacity="0.66"/><rect x="210.0" y="72.8" width="6" height="1.3" fill="#444" opacity="0.49"/><rect x="106.6" y="41.0" width="5" height="1" fill="#444" opacity="0.42"/><rect x="264.9" y="37.7" width="2" height="1.3" fill="#444" opacity="0.56"/><rect x="28.4" y="47.9" width="6" height="1" fill="#444" opacity="0.68"/><rect x="165.5" y="7.7" width="3" height="1.3" fill="#444" opacity="0.40"/><rect x="68.6" y="30.1" width="4" height="1.3" fill="#444" opacity="0.39"/><rect x="228.5" y="82.4" width="5" height="1.3" fill="#444" opacity="0.52"/><rect x="24.0" y="10.3" width="4" height="1.3" fill="#444" opacity="0.52"/><rect x="56.0" y="79.1" width="4" height="1" fill="#444" opacity="0.59"/><rect x="246.0" y="63.4" width="4" height="1" fill="#444" opacity="0.59"/><rect x="71.0" y="31.7" width="3" height="1.3" fill="#444" opacity="0.62"/><rect x="143.7" y="65.1" width="4" height="1" fill="#444" opacity="0.56"/><rect x="212.3" y="63.4" width="3" height="1" fill="#444" opacity="0.64"/><rect x="199.3" y="20.4" width="6" height="1.3" fill="#444" opacity="0.47"/><rect x="8.8" y="4.3" width="4" height="1.3" fill="#444" opacity="0.44"/><rect x="186.6" y="79.5" width="5" height="1.3" fill="#444" opacity="0.68"/><rect x="98.7" y="19.9" width="3" height="1.3" fill="#444" opacity="0.42"/><rect x="55.8" y="52.5" width="6" height="1" fill="#444" opacity="0.52"/><rect x="176.0" y="66.8" width="2" height="1" fill="#444" opacity="0.67"/><rect x="210.7" y="62.8" width="5" height="1" fill="#444" opacity="0.50"/><rect x="171.4" y="9.0" width="8" height="1.3" fill="#444" opacity="0.51"/><rect x="200.2" y="8.9" width="3" height="1" fill="#444" opacity="0.70"/><rect x="8.4" y="49.9" width="5" height="1" fill="#444" opacity="0.56"/><rect x="252.2" y="14.6" width="6" height="1" fill="#444" opacity="0.36"/><rect x="215.2" y="60.8" width="2" height="1" fill="#444" opacity="0.50"/><rect x="234.6" y="68.9" width="3" height="1" fill="#444" opacity="0.44"/><rect x="79.5" y="21.5" width="6" height="1.3" fill="#444" opacity="0.44"/><rect x="113.3" y="12.6" width="8" height="1.3" fill="#444" opacity="0.66"/><rect x="178.5" y="68.0" width="6" height="1.3" fill="#444" opacity="0.64"/><rect x="236.3" y="12.6" width="3" height="1" fill="#444" opacity="0.66"/><rect x="209.1" y="51.3" width="3" height="1" fill="#444" opacity="0.40"/><rect x="17.6" y="57.3" width="6" height="1.3" fill="#444" opacity="0.62"/><rect x="29.4" y="47.4" width="3" height="1" fill="#444" opacity="0.45"/><rect x="208.0" y="43.1" width="6" height="1" fill="#444" opacity="0.62"/><rect x="245.5" y="37.9" width="6" height="1" fill="#444" opacity="0.59"/><rect x="122.2" y="45.2" width="5" height="1" fill="#444" opacity="0.59"/><rect x="235.9" y="78.3" width="4" height="1" fill="#444" opacity="0.64"/><rect x="37.8" y="11.9" width="5" height="1.3" fill="#444" opacity="0.38"/><rect x="65.5" y="7.9" width="8" height="1.3" fill="#444" opacity="0.62"/><rect x="241.4" y="14.5" width="8" height="1.3" fill="#444" opacity="0.40"/><rect x="237.6" y="80.4" width="3" height="1" fill="#444" opacity="0.49"/><rect x="131.6" y="82.2" width="3" height="1" fill="#444" opacity="0.60"/><rect x="267.4" y="34.7" width="5" height="1" fill="#444" opacity="0.47"/><rect x="25.7" y="31.6" width="4" height="1.3" fill="#444" opacity="0.50"/><rect x="5.8" y="28.9" width="6" height="1.3" fill="#444" opacity="0.53"/><rect x="18.2" y="81.8" width="3" height="1" fill="#444" opacity="0.38"/><rect x="73.9" y="75.4" width="3" height="1.3" fill="#444" opacity="0.61"/><rect x="220.7" y="70.8" width="8" height="1.3" fill="#444" opacity="0.49"/><rect x="75.8" y="66.8" width="3" height="1.3" fill="#444" opacity="0.66"/><rect x="73.1" y="3.4" width="2" height="1.3" fill="#444" opacity="0.38"/><rect x="230.5" y="7.4" width="2" height="1.3" fill="#444" opacity="0.35"/><rect x="267.5" y="35.8" width="4" height="1" fill="#444" opacity="0.37"/><rect x="191.2" y="78.0" width="3" height="1.3" fill="#444" opacity="0.37"/><rect x="55.1" y="27.3" width="4" height="1" fill="#444" opacity="0.45"/><rect x="94.0" y="3.5" width="4" height="1" fill="#444" opacity="0.36"/><rect x="197.5" y="46.6" width="3" height="1.3" fill="#444" opacity="0.44"/><rect x="120.8" y="55.3" width="8" height="1.3" fill="#444" opacity="0.58"/><rect x="147.3" y="74.0" width="6" height="1.3" fill="#444" opacity="0.59"/><rect x="264.3" y="29.8" width="8" height="1" fill="#444" opacity="0.49"/><rect x="94.1" y="6.4" width="3" height="1" fill="#444" opacity="0.37"/><rect x="199.6" y="22.7" width="3" height="1" fill="#444" opacity="0.38"/><rect x="226.5" y="72.5" width="8" height="1.3" fill="#444" opacity="0.56"/><rect x="186.6" y="5.7" width="3" height="1" fill="#444" opacity="0.44"/><rect x="2.0" y="31.5" width="4" height="1.3" fill="#444" opacity="0.44"/><rect x="259.8" y="27.1" width="4" height="1" fill="#444" opacity="0.35"/><rect x="103.3" y="40.4" width="6" height="1" fill="#444" opacity="0.44"/><rect x="209.0" y="9.4" width="2" height="1" fill="#444" opacity="0.49"/><rect x="12.2" y="3.8" width="4" height="1" fill="#444" opacity="0.38"/><rect x="257.6" y="71.1" width="3" height="1.3" fill="#444" opacity="0.62"/><rect x="77.2" y="52.1" width="3" height="1" fill="#444" opacity="0.64"/><rect x="116.0" y="58.8" width="6" height="1" fill="#444" opacity="0.67"/><rect x="202.8" y="48.0" width="2" height="1" fill="#444" opacity="0.38"/><rect x="12.2" y="53.6" width="2" height="1.3" fill="#444" opacity="0.64"/><rect x="168.8" y="57.1" width="5" height="1.3" fill="#444" opacity="0.35"/><rect x="214.8" y="62.6" width="6" height="1" fill="#444" opacity="0.58"/><rect x="18.7" y="61.7" width="4" height="1" fill="#444" opacity="0.65"/><rect x="63.9" y="63.3" width="3" height="1.3" fill="#444" opacity="0.52"/><rect x="103.5" y="40.8" width="8" height="1.3" fill="#444" opacity="0.62"/><rect x="166.3" y="54.1" width="2" height="1" fill="#444" opacity="0.47"/><rect x="175.6" y="58.1" width="6" height="1" fill="#444" opacity="0.35"/><rect x="17.3" y="23.8" width="8" height="1" fill="#444" opacity="0.59"/><rect x="126.0" y="11.6" width="6" height="1" fill="#444" opacity="0.46"/><rect x="24.0" y="40.3" width="4" height="1.3" fill="#444" opacity="0.38"/><rect x="136.8" y="82.6" width="4" height="1.3" fill="#444" opacity="0.42"/><rect x="254.4" y="19.1" width="6" height="1" fill="#444" opacity="0.40"/><rect x="141.4" y="79.2" width="3" height="1.3" fill="#444" opacity="0.66"/><rect x="241.6" y="41.4" width="2" height="1" fill="#444" opacity="0.35"/><rect x="81.9" y="13.4" width="4" height="1.3" fill="#444" opacity="0.46"/><rect x="226.2" y="2.1" width="4" height="1.3" fill="#444" opacity="0.39"/><rect x="249.3" y="59.8" width="8" height="1.3" fill="#444" opacity="0.44"/><rect x="18.4" y="33.6" width="6" height="1" fill="#444" opacity="0.48"/><rect x="115.7" y="24.3" width="2" height="1.3" fill="#444" opacity="0.39"/><rect x="224.7" y="25.1" width="3" height="1" fill="#444" opacity="0.69"/><rect x="117.9" y="27.6" width="4" height="1.3" fill="#444" opacity="0.66"/><rect x="218.6" y="53.1" width="6" height="1" fill="#444" opacity="0.60"/><rect x="14.3" y="61.3" width="5" height="1" fill="#444" opacity="0.58"/><rect x="77.7" y="6.0" width="6" height="1" fill="#444" opacity="0.41"/><rect x="112.2" y="24.8" width="4" height="1.3" fill="#444" opacity="0.49"/><rect x="65.0" y="41.1" width="8" height="1.3" fill="#444" opacity="0.39"/><rect x="173.4" y="8.1" width="6" height="1.3" fill="#444" opacity="0.54"/><rect x="122.4" y="29.0" width="5" height="1.3" fill="#444" opacity="0.40"/><rect x="52.6" y="9.3" width="4" height="1" fill="#444" opacity="0.46"/><rect x="99.7" y="67.6" width="3" height="1" fill="#444" opacity="0.61"/><rect x="111.6" y="35.5" width="6" height="1" fill="#444" opacity="0.48"/><rect x="91.6" y="7.0" width="4" height="1.3" fill="#444" opacity="0.39"/><rect x="232.2" y="19.5" width="4" height="1" fill="#444" opacity="0.48"/><circle cx="86.0" cy="68.1" r="1.4" fill="#fff" stroke="#3fb6d4" stroke-width="0.9"/><circle cx="36.8" cy="37.0" r="1.4" fill="#fff" stroke="#9b5bd6" stroke-width="0.9"/><circle cx="260.6" cy="42.2" r="1.4" fill="#fff" stroke="#3fb6d4" stroke-width="0.9"/><circle cx="107.1" cy="77.1" r="1.4" fill="#fff" stroke="#3fb6d4" stroke-width="0.9"/><circle cx="230.6" cy="80.8" r="1.4" fill="#fff" stroke="#3fb6d4" stroke-width="0.9"/><circle cx="211.3" cy="20.9" r="1.4" fill="#fff" stroke="#3fb6d4" stroke-width="0.9"/><circle cx="141.9" cy="57.6" r="1.4" fill="#fff" stroke="#47b347" stroke-width="0.9"/><circle cx="189.5" cy="70.7" r="1.4" fill="#fff" stroke="#9b5bd6" stroke-width="0.9"/><circle cx="25.6" cy="65.1" r="1.4" fill="#fff" stroke="#3fb6d4" stroke-width="0.9"/><circle cx="211.1" cy="21.6" r="1.4" fill="#fff" stroke="#3fb6d4" stroke-width="0.9"/><circle cx="37.0" cy="23.1" r="1.4" fill="#fff" stroke="#47b347" stroke-width="0.9"/><circle cx="119.4" cy="64.1" r="1.4" fill="#fff" stroke="#3fb6d4" stroke-width="0.9"/><circle cx="21.7" cy="45.0" r="1.4" fill="#fff" stroke="#3fb6d4" stroke-width="0.9"/><circle cx="54.0" cy="23.9" r="1.4" fill="#fff" stroke="#3fb6d4" stroke-width="0.9"/><circle cx="3.3" cy="46.0" r="1.4" fill="#fff" stroke="#9b5bd6" stroke-width="0.9"/><circle cx="77.1" cy="28.3" r="1.4" fill="#fff" stroke="#3fb6d4" stroke-width="0.9"/><circle cx="68.7" cy="79.8" r="1.4" fill="#fff" stroke="#47b347" stroke-width="0.9"/><circle cx="175.8" cy="7.4" r="1.4" fill="#fff" stroke="#3fb6d4" stroke-width="0.9"/><circle cx="135.6" cy="57.0" r="1.4" fill="#fff" stroke="#9b5bd6" stroke-width="0.9"/><circle cx="24.6" cy="21.2" r="1.4" fill="#fff" stroke="#9b5bd6" stroke-width="0.9"/><circle cx="249.1" cy="21.1" r="1.4" fill="#fff" stroke="#3fb6d4" stroke-width="0.9"/><circle cx="188.1" cy="60.5" r="1.4" fill="#fff" stroke="#47b347" stroke-width="0.9"/><circle cx="215.0" cy="62.1" r="1.4" fill="#fff" stroke="#3fb6d4" stroke-width="0.9"/><circle cx="20.9" cy="42.7" r="1.4" fill="#fff" stroke="#3fb6d4" stroke-width="0.9"/><circle cx="85.9" cy="68.6" r="1.4" fill="#fff" stroke="#3fb6d4" stroke-width="0.9"/><circle cx="126.7" cy="24.2" r="1.4" fill="#fff" stroke="#47b347" stroke-width="0.9"/><circle cx="32.0" cy="52.9" r="1.4" fill="#fff" stroke="#3fb6d4" stroke-width="0.9"/><circle cx="52.8" cy="20.9" r="1.4" fill="#fff" stroke="#9b5bd6" stroke-width="0.9"/><circle cx="245.2" cy="7.5" r="1.4" fill="#fff" stroke="#3fb6d4" stroke-width="0.9"/><circle cx="41.9" cy="34.5" r="1.4" fill="#fff" stroke="#3fb6d4" stroke-width="0.9"/><circle cx="9.3" cy="50.7" r="1.4" fill="#fff" stroke="#9b5bd6" stroke-width="0.9"/><circle cx="16.8" cy="7.8" r="1.4" fill="#fff" stroke="#9b5bd6" stroke-width="0.9"/><circle cx="122.6" cy="60.0" r="1.4" fill="#fff" stroke="#47b347" stroke-width="0.9"/><circle cx="197.9" cy="82.8" r="1.4" fill="#fff" stroke="#3fb6d4" stroke-width="0.9"/><circle cx="90.6" cy="17.8" r="1.4" fill="#fff" stroke="#3fb6d4" stroke-width="0.9"/><circle cx="201.5" cy="5.6" r="1.4" fill="#fff" stroke="#47b347" stroke-width="0.9"/><rect x="0" y="85" width="273" height="4" fill="#f4f2ee" opacity=".6"/><rect x="3" y="86" width="6" height="1.4" fill="#333" opacity=".6"/><rect x="15" y="86" width="8" height="1.4" fill="#333" opacity=".6"/><rect x="27" y="86" width="10" height="1.4" fill="#333" opacity=".6"/><rect x="39" y="86" width="7" height="1.4" fill="#333" opacity=".6"/><rect x="51" y="86" width="9" height="1.4" fill="#333" opacity=".6"/><rect x="63" y="86" width="6" height="1.4" fill="#333" opacity=".6"/><rect x="75" y="86" width="8" height="1.4" fill="#333" opacity=".6"/><rect x="87" y="86" width="10" height="1.4" fill="#333" opacity=".6"/><rect x="99" y="86" width="7" height="1.4" fill="#333" opacity=".6"/><rect x="111" y="86" width="9" height="1.4" fill="#333" opacity=".6"/><rect x="123" y="86" width="6" height="1.4" fill="#333" opacity=".6"/><rect x="135" y="86" width="8" height="1.4" fill="#333" opacity=".6"/><rect x="147" y="86" width="10" height="1.4" fill="#333" opacity=".6"/><rect x="159" y="86" width="7" height="1.4" fill="#333" opacity=".6"/><rect x="171" y="86" width="9" height="1.4" fill="#333" opacity=".6"/><rect x="183" y="86" width="6" height="1.4" fill="#333" opacity=".6"/><rect x="195" y="86" width="8" height="1.4" fill="#333" opacity=".6"/><rect x="207" y="86" width="10" height="1.4" fill="#333" opacity=".6"/><rect x="219" y="86" width="7" height="1.4" fill="#333" opacity=".6"/><rect x="231" y="86" width="9" height="1.4" fill="#333" opacity=".6"/><rect x="243" y="86" width="6" height="1.4" fill="#333" opacity=".6"/><rect x="255" y="86" width="8" height="1.4" fill="#333" opacity=".6"/><rect x="3" y="4" width="9" height="4" fill="#7f97e6"/><rect x="12" y="4" width="7" height="4" fill="#fff"/><rect x="15" y="5" width="2" height="2" fill="#111"/><rect x="1" y="80" width="3" height="2" fill="#e33"/><circle cx="8" cy="81" r="1.5" fill="#2b35d8"/><rect x="11" y="80" width="3" height="2" fill="#e33"/><rect x="265" y="9" width="5" height="5" fill="#fff" stroke="#ccc" stroke-width=".5"/><defs><filter id="bl" x="-50%" y="-50%" width="200%" height="200%"><feGaussianBlur stdDeviation="2"/></filter></defs><polygon points="195.0,30.0 219.0,35.0 207.0,59.0 194.0,52.0" fill="#555" opacity=".45" filter="url(#bl)"/><rect x="129" y="12" width="67" height="40" fill="#fff"/><rect x="133" y="19" width="6" height="1" fill="#333" opacity=".8"/><rect x="133" y="25.5" width="13" height="1" fill="#333" opacity=".8"/><rect x="133" y="33" width="5" height="1" fill="#555" opacity=".8"/><rect x="191" y="16" width="1" height="1" fill="#888"/><path d="M158.5 63 l-2 -3 a2 2 0 1 1 4 0 z" fill="#e53935"/></svg><div class="a" style="left:649px;top:268.5px;font-size:3.6px;line-height:3.6px;color:#444;">显示地图</div><div class="a lbl" style="left:624.5px;top:211.5px">地图模式</div><div class="a" style="left:746px;top:264px;font-size:4.2px;line-height:4.2px;color:#8a8a8a;">激活 Windows</div><div class="a" style="left:746px;top:270.3px;font-size:3.1px;line-height:3.1px;color:#999;">转到"设置"以激活Windows。</div><div class="a" style="left:806px;top:140px;width:296px;height:139px;border:1px solid #8c8c8c;background:#f0f2f5"></div><div class="a" style="left:807px;top:141px;width:294px;height:10.5px;background:linear-gradient(90deg,#4d70f0 0%,#4d72ee 60%,#5693d0 79%,#56adba 89%,#5ac49c 100%)"></div><svg class="a" style="left:812px;top:144.04999999999998px" width="8" height="6" viewBox="0 0 8 6"><path d="M0.6 5.8 L2.2 0.6 L3.4 4.2 L5.4 0.6 L6.6 5.8" fill="none" stroke="#1bb7a6" stroke-width="1.7" stroke-linejoin="round"/></svg><div class="a" style="left:821px;top:144.65px;font-size:4.6px;line-height:4.6px;color:#f4f7ff;letter-spacing:.3px">mywp</div><div class="a" style="left:845px;top:145.04999999999998px;width:4px;height:3.6px;background:#fff;opacity:.9"></div><div class="a" style="left:846.8px;top:145.04999999999998px;width:0.6px;height:3.6px;background:#6c8cf0"></div><div class="a" style="left:858px;top:144.65px;font-size:4.2px;line-height:4.2px;color:#fff;font-weight:bold">三 系统</div><div class="a" style="left:871px;top:144.85px;font-size:3.5px;line-height:3.5px;color:#fff;">▾</div><div class="a" style="left:882px;top:144.65px;font-size:4.2px;line-height:4.2px;color:#fff;font-weight:bold">auto系统运</div><div class="a" style="left:910px;top:144.65px;font-size:4.2px;line-height:4.2px;color:#fff;font-weight:bold">◦ 在线开发</div><div class="a" style="left:936px;top:146.35px;width:3px;height:1px;background:#fff"></div><div class="a" style="left:945px;top:144.35px;width:10px;height:5px;background:#3dba7e;border-radius:2px"></div><div class="a" style="left:947.5px;top:145.04999999999998px;font-size:3.6px;line-height:3.6px;color:#fff;">▤</div><div class="a" style="left:1058px;top:144.85px;width:2.5px;height:3.5px;background:#fff;border-radius:1px 1px 0 0;opacity:.9"></div><div class="a" style="left:1067px;top:143.35px;width:6px;height:7px;background:radial-gradient(circle at 55% 50%,#d8c0b0 0 30%,#2e3038 55%);border-radius:50%"></div><div class="a" style="left:1075px;top:144.65px;font-size:4.2px;line-height:4.2px;color:#fff;font-weight:bold">admin超</div><div class="a" style="left:1093px;top:146.35px;width:3px;height:1px;background:#fff"></div><div class="a" style="left:807px;top:151.5px;width:294px;height:9.5px;background:#fff"></div><div class="a" style="left:811px;top:154.25px;font-size:4px;line-height:4px;color:#4a4f5c;">⌂ 首页</div><div class="a" style="left:821px;top:156.25px;width:2px;height:1.5px;background:#4a7de0"></div><div class="a" style="left:826px;top:154.25px;font-size:3.5px;line-height:3.5px;color:#bbb;">✓</div><div class="a" style="left:835px;top:152.95px;width:27px;height:6.5px;background:#f3f4f7"></div><div class="a" style="left:839px;top:154.25px;font-size:4px;line-height:4px;color:#555;">视图表单</div><div class="a" style="left:856px;top:154.25px;font-size:4px;line-height:4px;color:#999;">×</div><div class="a" style="left:864px;top:152.95px;width:27px;height:6.5px;background:#f3f4f7"></div><div class="a" style="left:868px;top:154.25px;font-size:4px;line-height:4px;color:#555;">视图表单</div><div class="a" style="left:885px;top:154.25px;font-size:4px;line-height:4px;color:#999;">×</div><div class="a" style="left:893px;top:152.95px;width:27px;height:6.5px;background:#6d8ef2"></div><div class="a" style="left:897px;top:154.25px;font-size:4px;line-height:4px;color:#fff;font-weight:bold">视图表单</div><div class="a" style="left:914px;top:154.25px;font-size:4px;line-height:4px;color:#fff;">×</div><div class="a" style="left:1070px;top:155.75px;width:1px;height:1px;background:#999"></div><div class="a" style="left:1077px;top:154.25px;font-size:4px;line-height:4px;color:#556;">≡ 关闭</div><div class="a" style="left:1092px;top:154.05px;font-size:4.4px;line-height:4.4px;color:#777;">⟳</div><div class="a" style="left:811px;top:164.5px;width:284.5px;height:109.5px;background:#fff;border-radius:1.5px"></div><div class="a" style="left:815.5px;top:169px;width:0.8px;height:4px;background:#666"></div><div class="a" style="left:814px;top:170.5px;width:3.8px;height:0.8px;background:#666"></div><div class="a" style="left:823px;top:169.5px;width:2.5px;height:3.5px;border:0.7px solid #a08060"></div><svg class="a" style="left:829.5px;top:168.5px" width="5" height="5" viewBox="0 0 5 5"><path d="M4 1.2 A1.8 1.8 0 1 0 4 3.8" fill="none" stroke="#5a8ad0" stroke-width=".8"/></svg><svg class="a" style="left:837.5px;top:168.5px" width="5" height="5" viewBox="0 0 5 5"><circle cx="2.5" cy="2.5" r="1.7" fill="none" stroke="#b08a60" stroke-width=".8"/></svg><div class="a" style="left:811px;top:185px;width:48px;height:6px;background:#f1f3f7"></div><div class="a" style="left:813px;top:182px;width:1px;height:1px;background:#999"></div><div class="a" style="left:820px;top:181.5px;width:3.5px;height:2px;background:#6a4a90;opacity:.8"></div><div class="a" style="left:816.5px;top:187.5px;width:1px;height:1px;background:#bbb"></div><div class="a" style="left:825px;top:187px;width:2.5px;height:1.5px;background:#6ab0e0;opacity:.8"></div><div class="a" style="left:826px;top:193px;width:4px;height:1px;background:#e0a060;opacity:.9"></div><div class="a" style="left:824px;top:199px;width:2.5px;height:1px;background:#ccc"></div><div class="a" style="left:828px;top:198.5px;width:3px;height:2px;background:#8a5a30"></div><div class="a" style="left:832px;top:199.5px;width:2px;height:1px;background:#333"></div><div class="a" style="left:817px;top:205px;width:1px;height:1px;background:#aaa"></div><div class="a" style="left:822px;top:204.5px;width:4px;height:1px;background:#333"></div><div class="a" style="left:826px;top:205px;width:2px;height:2px;background:#5ab0e0;opacity:.8"></div><div class="a" style="left:829px;top:210px;width:3px;height:1px;background:#333"></div><div class="a" style="left:861px;top:167px;width:234.5px;height:1px;background:#ebeef5"></div><div class="a" style="left:865px;top:171.5px;width:225px;height:80px;border:1px solid #ebeef5;border-bottom:none;background:#fff"></div><div class="a" style="left:866px;top:172.5px;width:223px;height:9.5px;background:#f7f8fa"></div><div class="a" style="left:866px;top:182px;width:223px;height:1px;background:#ebeef5"></div><div class="a" style="left:869px;top:175.5px;width:2.5px;height:3px;border:0.6px solid #ddd"></div><div class="a" style="left:905px;top:175.3px;font-size:3.7px;line-height:3.7px;color:#3a3f50;font-weight:bold">创建时间</div><div class="a" style="left:976px;top:175.3px;font-size:3.7px;line-height:3.7px;color:#3a3f50;font-weight:bold">更新时间</div><div class="a" style="left:1047px;top:175.3px;font-size:3.7px;line-height:3.7px;color:#3a3f50;font-weight:bold">状态码</div><div class="a" style="left:869px;top:185.5px;width:2.5px;height:3px;border:0.6px solid #eee"></div><div class="a" style="left:904px;top:185px;font-size:3.5px;line-height:3.5px;color:#8a6a4a;">Tony Pang</div><div class="a" style="left:976px;top:185px;font-size:3.5px;line-height:3.5px;color:#4a6cd0;">2021-08</div><div class="a" style="left:1051px;top:185px;font-size:3.5px;line-height:3.5px;color:#333;">01</div><div class="a" style="left:869px;top:195.5px;width:2.5px;height:3px;border:0.6px solid #eee"></div><div class="a" style="left:904px;top:195px;font-size:3.5px;line-height:3.5px;color:#8a6a4a;">Tony Pang</div><div class="a" style="left:976px;top:195px;font-size:3.5px;line-height:3.5px;color:#4a6cd0;">2021-08</div><div class="a" style="left:1051px;top:195px;font-size:3.5px;line-height:3.5px;color:#333;">01</div><div class="a lbl" style="left:917.5px;top:212.5px">树形模式</div><div class="a" style="left:1045px;top:260px;font-size:4.2px;line-height:4.2px;color:#8a8a8a;">激活 Windows</div><div class="a" style="left:1045px;top:266.3px;font-size:3.1px;line-height:3.1px;color:#999;">转到"设置"以激活Windows。</div><div class="a" style="left:507px;top:285px;width:295px;height:139px;border:1px solid #8c8c8c;background:#f0f2f5"></div><div class="a" style="left:508px;top:286px;width:293px;height:10.5px;background:linear-gradient(90deg,#4d70f0 0%,#4d72ee 60%,#5693d0 79%,#56adba 89%,#5ac49c 100%)"></div><svg class="a" style="left:513px;top:289.05px" width="8" height="6" viewBox="0 0 8 6"><path d="M0.6 5.8 L2.2 0.6 L3.4 4.2 L5.4 0.6 L6.6 5.8" fill="none" stroke="#1bb7a6" stroke-width="1.7" stroke-linejoin="round"/></svg><div class="a" style="left:522px;top:289.65000000000003px;font-size:4.6px;line-height:4.6px;color:#f4f7ff;letter-spacing:.3px">mywp</div><div class="a" style="left:546px;top:290.05px;width:4px;height:3.6px;background:#fff;opacity:.9"></div><div class="a" style="left:547.8px;top:290.05px;width:0.6px;height:3.6px;background:#6c8cf0"></div><div class="a" style="left:559px;top:289.65000000000003px;font-size:4.2px;line-height:4.2px;color:#fff;font-weight:bold">三 系统</div><div class="a" style="left:572px;top:289.85px;font-size:3.5px;line-height:3.5px;color:#fff;">▾</div><div class="a" style="left:583px;top:289.65000000000003px;font-size:4.2px;line-height:4.2px;color:#fff;font-weight:bold">auto系统运</div><div class="a" style="left:611px;top:289.65000000000003px;font-size:4.2px;line-height:4.2px;color:#fff;font-weight:bold">◦ 在线开发</div><div class="a" style="left:637px;top:291.35px;width:3px;height:1px;background:#fff"></div><div class="a" style="left:646px;top:289.35px;width:10px;height:5px;background:#3dba7e;border-radius:2px"></div><div class="a" style="left:648.5px;top:290.05px;font-size:3.6px;line-height:3.6px;color:#fff;">▤</div><div class="a" style="left:758px;top:289.85px;width:2.5px;height:3.5px;background:#fff;border-radius:1px 1px 0 0;opacity:.9"></div><div class="a" style="left:767px;top:288.35px;width:6px;height:7px;background:radial-gradient(circle at 55% 50%,#d8c0b0 0 30%,#2e3038 55%);border-radius:50%"></div><div class="a" style="left:775px;top:289.65000000000003px;font-size:4.2px;line-height:4.2px;color:#fff;font-weight:bold">admin超</div><div class="a" style="left:793px;top:291.35px;width:3px;height:1px;background:#fff"></div><div class="a" style="left:508px;top:296.5px;width:293px;height:9.0px;background:#fff"></div><div class="a" style="left:512px;top:299.0px;font-size:4px;line-height:4px;color:#4a4f5c;">⌂ 首页</div><div class="a" style="left:522px;top:301.0px;width:2px;height:1.5px;background:#4a7de0"></div><div class="a" style="left:527px;top:299.0px;font-size:3.5px;line-height:3.5px;color:#bbb;">✓</div><div class="a" style="left:536px;top:297.7px;width:27px;height:6.5px;background:#6d8ef2"></div><div class="a" style="left:540px;top:299.0px;font-size:4px;line-height:4px;color:#fff;font-weight:bold">视图表单</div><div class="a" style="left:557px;top:299.0px;font-size:4px;line-height:4px;color:#fff;">×</div><div class="a" style="left:770px;top:300.5px;width:1px;height:1px;background:#999"></div><div class="a" style="left:777px;top:299.0px;font-size:4px;line-height:4px;color:#556;">≡ 关闭</div><div class="a" style="left:792px;top:298.8px;font-size:4.4px;line-height:4.4px;color:#777;">⟳</div><div class="a" style="left:512px;top:310px;width:285px;height:108px;background:#fff;border-radius:1.5px"></div><div class="a" style="left:515px;top:313px;width:15px;height:6px;background:#3a7bbf"></div><div class="a" style="left:518px;top:314.2px;font-size:3.6px;line-height:3.6px;color:#fff;">新增</div><div class="a" style="left:531px;top:313px;width:15px;height:6px;background:#d9534f"></div><div class="a" style="left:534px;top:314.2px;font-size:3.6px;line-height:3.6px;color:#fff;">删除</div><div class="a" style="left:547px;top:313px;width:18px;height:6px;background:#85c1ea"></div><div class="a" style="left:550px;top:314.2px;font-size:3.6px;line-height:3.6px;color:#fff;">导出</div><div class="a" style="left:515px;top:333px;font-size:3.6px;line-height:3.6px;color:#999;">2021-08  ▾</div><div class="a" style="left:514px;top:337px;width:30px;height:1px;background:#d0d0d0"></div><div class="a" style="left:728px;top:330px;width:44px;height:7px;background:#fff;box-shadow:0 0.5px 1px rgba(0,0,0,.25)"></div><div class="a" style="left:737px;top:331.5px;font-size:3.6px;line-height:3.6px;color:#5a4aa0;">月视图</div><div class="a" style="left:757px;top:331.5px;font-size:3.6px;line-height:3.6px;color:#5a4aa0;">周视</div><div class="a" style="left:772px;top:330px;width:22px;height:7px;background:#49c5d3"></div><div class="a" style="left:778px;top:331.5px;font-size:3.6px;line-height:3.6px;color:#fff;">日视</div><div class="a" style="left:515.0px;top:343.5px;font-size:3.8px;line-height:3.8px;color:#222;font-weight:bold">周一</div><div class="a" style="left:555.2px;top:343.5px;font-size:3.8px;line-height:3.8px;color:#222;font-weight:bold">周二</div><div class="a" style="left:595.4px;top:343.5px;font-size:3.8px;line-height:3.8px;color:#222;font-weight:bold">周三</div><div class="a" style="left:635.6px;top:343.5px;font-size:3.8px;line-height:3.8px;color:#222;font-weight:bold">周四</div><div class="a" style="left:675.8px;top:343.5px;font-size:3.8px;line-height:3.8px;color:#222;font-weight:bold">周五</div><div class="a" style="left:716.0px;top:343.5px;font-size:3.8px;line-height:3.8px;color:#222;font-weight:bold">周六</div><div class="a" style="left:756.2px;top:343.5px;font-size:3.8px;line-height:3.8px;color:#222;font-weight:bold">周日</div><div class="a" style="left:517.0px;top:353.5px;font-size:3px;line-height:3px;color:#3a8ee0;opacity:.75">1</div><div class="a" style="left:557.2px;top:353.5px;font-size:3px;line-height:3px;color:#2a3a8a;opacity:.75">2</div><div class="a" style="left:597.4px;top:353.5px;font-size:3px;line-height:3px;color:#333;opacity:.75">3</div><div class="a" style="left:637.6px;top:353.5px;font-size:3px;line-height:3px;color:#3a8ee0;opacity:.75">4</div><div class="a" style="left:677.8px;top:353.5px;font-size:3px;line-height:3px;color:#2a3a8a;opacity:.75">5</div><div class="a" style="left:718.0px;top:353.5px;font-size:3px;line-height:3px;color:#333;opacity:.75">6</div><div class="a" style="left:758.2px;top:353.5px;font-size:3px;line-height:3px;color:#3a8ee0;opacity:.75">7</div><div class="a" style="left:517.0px;top:377px;font-size:3px;line-height:3px;color:#2a3a8a;opacity:.75">8</div><div class="a" style="left:557.2px;top:377px;font-size:3px;line-height:3px;color:#333;opacity:.75">9</div><div class="a" style="left:597.4px;top:377px;font-size:3px;line-height:3px;color:#3a8ee0;opacity:.75">10</div><div class="a" style="left:637.6px;top:377px;font-size:3px;line-height:3px;color:#2a3a8a;opacity:.75">11</div><div class="a" style="left:677.8px;top:377px;font-size:3px;line-height:3px;color:#333;opacity:.75">12</div><div class="a" style="left:718.0px;top:377px;font-size:3px;line-height:3px;color:#3a8ee0;opacity:.75">13</div><div class="a" style="left:758.2px;top:377px;font-size:3px;line-height:3px;color:#2a3a8a;opacity:.75">14</div><div class="a" style="left:517.0px;top:400.5px;font-size:3px;line-height:3px;color:#333;opacity:.75">15</div><div class="a" style="left:557.2px;top:400.5px;font-size:3px;line-height:3px;color:#3a8ee0;opacity:.75">16</div><div class="a" style="left:597.4px;top:400.5px;font-size:3px;line-height:3px;color:#2a3a8a;opacity:.75">17</div><div class="a" style="left:637.6px;top:400.5px;font-size:3px;line-height:3px;color:#333;opacity:.75">18</div><div class="a" style="left:677.8px;top:400.5px;font-size:3px;line-height:3px;color:#3a8ee0;opacity:.75">19</div><div class="a" style="left:718.0px;top:400.5px;font-size:3px;line-height:3px;color:#2a3a8a;opacity:.75">20</div><div class="a" style="left:758.2px;top:400.5px;font-size:3px;line-height:3px;color:#333;opacity:.75">21</div><div class="a" style="left:634px;top:349px;width:1px;height:70px;background:#e6e6e6"></div><div class="a" style="left:674px;top:349px;width:1px;height:70px;background:#e6e6e6"></div><div class="a" style="left:514px;top:398px;width:281px;height:1px;background:#e6e6e6"></div><div class="a lbl" style="left:618px;top:365.5px">日历模式</div><div class="a" style="left:746px;top:405px;font-size:4.2px;line-height:4.2px;color:#8a8a8a;">激活 Windows</div><div class="a" style="left:746px;top:411.3px;font-size:3.1px;line-height:3.1px;color:#999;">转到"设置"以激活Windows。</div><div class="a" style="left:806px;top:282px;width:296px;height:141px;border:1px solid #8c8c8c;background:#f0f2f5"></div><div class="a" style="left:807px;top:283px;width:294px;height:10.699999999999989px;background:linear-gradient(90deg,#4d70f0 0%,#4d72ee 60%,#5693d0 79%,#56adba 89%,#5ac49c 100%)"></div><svg class="a" style="left:812px;top:286.15000000000003px" width="8" height="6" viewBox="0 0 8 6"><path d="M0.6 5.8 L2.2 0.6 L3.4 4.2 L5.4 0.6 L6.6 5.8" fill="none" stroke="#1bb7a6" stroke-width="1.7" stroke-linejoin="round"/></svg><div class="a" style="left:821px;top:286.75000000000006px;font-size:4.6px;line-height:4.6px;color:#f4f7ff;letter-spacing:.3px">mywp</div><div class="a" style="left:845px;top:287.15000000000003px;width:4px;height:3.6px;background:#fff;opacity:.9"></div><div class="a" style="left:846.8px;top:287.15000000000003px;width:0.6px;height:3.6px;background:#6c8cf0"></div><div class="a" style="left:858px;top:286.75000000000006px;font-size:4.2px;line-height:4.2px;color:#fff;font-weight:bold">三 系统</div><div class="a" style="left:871px;top:286.95000000000005px;font-size:3.5px;line-height:3.5px;color:#fff;">▾</div><div class="a" style="left:882px;top:286.75000000000006px;font-size:4.2px;line-height:4.2px;color:#fff;font-weight:bold">auto系统运</div><div class="a" style="left:910px;top:286.75000000000006px;font-size:4.2px;line-height:4.2px;color:#fff;font-weight:bold">◦ 在线开发</div><div class="a" style="left:936px;top:288.45000000000005px;width:3px;height:1px;background:#fff"></div><div class="a" style="left:945px;top:286.45000000000005px;width:10px;height:5px;background:#3dba7e;border-radius:2px"></div><div class="a" style="left:947.5px;top:287.15000000000003px;font-size:3.6px;line-height:3.6px;color:#fff;">▤</div><div class="a" style="left:1058px;top:286.95000000000005px;width:2.5px;height:3.5px;background:#fff;border-radius:1px 1px 0 0;opacity:.9"></div><div class="a" style="left:1067px;top:285.45000000000005px;width:6px;height:7px;background:radial-gradient(circle at 55% 50%,#d8c0b0 0 30%,#2e3038 55%);border-radius:50%"></div><div class="a" style="left:1075px;top:286.75000000000006px;font-size:4.2px;line-height:4.2px;color:#fff;font-weight:bold">admin超</div><div class="a" style="left:1093px;top:288.45000000000005px;width:3px;height:1px;background:#fff"></div><div class="a" style="left:807px;top:293.7px;width:294px;height:9.300000000000011px;background:#fff"></div><div class="a" style="left:811px;top:296.35px;font-size:4px;line-height:4px;color:#4a4f5c;">⌂ 首页</div><div class="a" style="left:821px;top:298.35px;width:2px;height:1.5px;background:#4a7de0"></div><div class="a" style="left:826px;top:296.35px;font-size:3.5px;line-height:3.5px;color:#bbb;">✓</div><div class="a" style="left:835px;top:295.05px;width:27px;height:6.5px;background:#6d8ef2"></div><div class="a" style="left:839px;top:296.35px;font-size:4px;line-height:4px;color:#fff;font-weight:bold">视图表单</div><div class="a" style="left:856px;top:296.35px;font-size:4px;line-height:4px;color:#fff;">×</div><div class="a" style="left:1070px;top:297.85px;width:1px;height:1px;background:#999"></div><div class="a" style="left:1077px;top:296.35px;font-size:4px;line-height:4px;color:#556;">≡ 关闭</div><div class="a" style="left:1092px;top:296.15000000000003px;font-size:4.4px;line-height:4.4px;color:#777;">⟳</div><div class="a" style="left:811px;top:308px;width:285px;height:110px;background:#fff;border-radius:1.5px"></div><div class="a" style="left:815px;top:311px;width:15px;height:6px;background:#3a7bbf"></div><div class="a" style="left:818px;top:312.2px;font-size:3.6px;line-height:3.6px;color:#fff;">新增</div><div class="a" style="left:831px;top:311px;width:15px;height:6px;background:#d9534f"></div><div class="a" style="left:834px;top:312.2px;font-size:3.6px;line-height:3.6px;color:#fff;">删除</div><div class="a" style="left:811px;top:320px;width:285px;height:12px;background:#f7f8fa"></div><div class="a" style="left:811px;top:343px;width:285px;height:1px;background:#ebeef5"></div><div class="a" style="left:811px;top:355px;width:285px;height:1px;background:#ebeef5"></div><div class="a" style="left:814px;top:324.5px;font-size:3.4px;line-height:3.4px;color:#ccc;">▢</div><div class="a" style="left:825px;top:324.5px;font-size:3.8px;line-height:3.8px;color:#3a3f50;font-weight:bold">名称字段</div><div class="a" style="left:916px;top:324.5px;font-size:3.8px;line-height:3.8px;color:#3a3f50;font-weight:bold">编码字段</div><div class="a" style="left:1007px;top:324.5px;font-size:3.8px;line-height:3.8px;color:#3a3f50;font-weight:bold">F名称</div><div class="a" style="left:826px;top:336.5px;font-size:3.6px;line-height:3.6px;color:#445;">▸ 测</div><div class="a" style="left:916px;top:336.5px;font-size:3.6px;line-height:3.6px;color:#c08030;">1</div><div class="a" style="left:1007px;top:336.5px;font-size:3.6px;line-height:3.6px;color:#4a6cd0;">Ncd</div><div class="a" style="left:814px;top:348.5px;font-size:3.6px;line-height:3.6px;color:#aaa;">—</div><div class="a" style="left:833px;top:348.5px;font-size:3.6px;line-height:3.6px;color:#4a6cd0;">试</div><div class="a" style="left:916px;top:348.5px;font-size:3.6px;line-height:3.6px;color:#c08030;">2</div><div class="a lbl" style="left:917px;top:366px">折叠模式</div><div class="a" style="left:946px;top:411.5px;font-size:3.8px;line-height:3.8px;color:#222;font-weight:bold">共 2 条</div><div class="a" style="left:1045px;top:405px;font-size:4.2px;line-height:4.2px;color:#8a8a8a;">激活 Windows</div><div class="a" style="left:1045px;top:411.3px;font-size:3.1px;line-height:3.1px;color:#999;">转到"设置"以激活Windows。</div>
</body></html>
